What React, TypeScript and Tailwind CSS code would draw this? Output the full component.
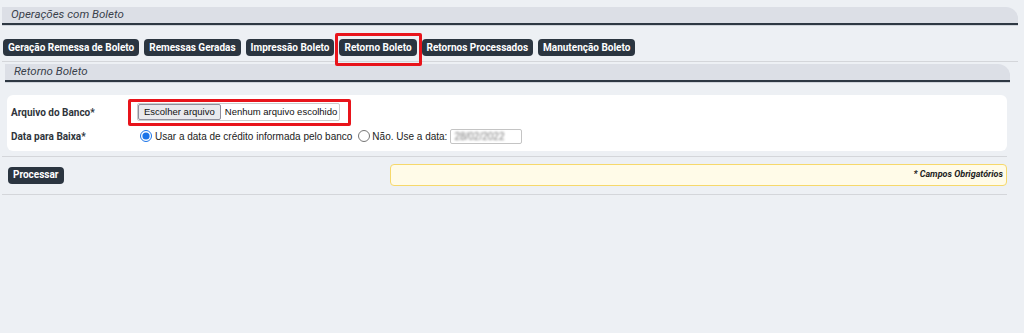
import React from "react";

const tabs = [
  "Geração Remessa de Boleto",
  "Remessas Geradas",
  "Impressão Boleto",
  "Retorno Boleto",
  "Retornos Processados",
  "Manutenção Boleto",
];

function SectionHeader({ title, className }: { title: string; className?: string }) {
  return (
    <div className={`${className} h-[18px] bg-[#dcdfe6] rounded-tr-[12px] border-b-2 border-[#2e3843] flex items-center pl-[9px] shadow-[0_1px_0_#cfd3da]`}>
      <span className="italic text-[11.5px] text-[#3a414b] leading-none">{title}</span>
    </div>
  );
}

function Tab({ label }: { label: string }) {
  return (
    <span className="h-[17px] px-[5px] bg-[#2b3540] text-white font-bold text-[10px] rounded-[4px] flex items-center leading-none whitespace-nowrap">
      {label}
    </span>
  );
}

export default function App() {
  return (
    <div className="min-h-[333px] w-full bg-[#edf0f4] font-['Roboto',sans-serif] text-[#222]">
      <div className="pt-[7px] pl-[2px] pr-[6px]">
        <SectionHeader title="Operações com Boleto" />
      </div>

      <div className="flex gap-[5px] pl-[3px] mt-[14px]">
        {tabs.map((t) =>
          t === "Retorno Boleto" ? (
            <span key={t} className="relative flex">
              <Tab label={t} />
              <span className="absolute -left-[4px] -right-[5px] -top-[6px] -bottom-[10px] border-[3px] border-[#e8141b] rounded-[2px]" />
            </span>
          ) : (
            <Tab key={t} label={t} />
          )
        )}
      </div>

      <div className="mt-[5px] ml-[2px] mr-[6px] h-px bg-[#d4d6da]" />

      <div className="pt-[2px] pl-[5px] pr-[14px]">
        <SectionHeader title="Retorno Boleto" />
      </div>

      <div className="mt-[13px] ml-[7px] mr-[17px] bg-white rounded-[6px] pt-[5px] pb-[5px] font-['Liberation_Sans',Arial,sans-serif] text-[10px]">
        <div className="flex items-center h-[24px]">
          <div className="w-[126px] pl-[4px] font-bold text-[10px] text-[#2f343b] font-['Roboto',sans-serif]">Arquivo do Banco*</div>
          <div className="relative flex items-center ml-[4px] h-[18px] border border-[#ccc] rounded-[2px] bg-white pr-[2px] text-[9.5px]">
            <span className="h-[16px] px-[5px] bg-[#e9e9ed] border border-[#8f8f9d] rounded-[2px] flex items-center text-[#111]">
              Escolher arquivo
            </span>
            <span className="ml-[4px] text-[#111]">Nenhum arquivo escolhido</span>
            <span className="absolute -left-[10px] -right-[12px] -top-[5px] -bottom-[6px] border-[3px] border-[#e8141b] rounded-[2px]" />
          </div>
        </div>
        <div className="flex items-center h-[20px] mt-[2px]">
          <div className="w-[126px] pl-[4px] font-bold text-[10px] text-[#2f343b] font-['Roboto',sans-serif]">Data para Baixa*</div>
          <label className="flex items-center ml-[7px] text-[#222]">
            <input type="radio" name="baixa" defaultChecked className="w-[12px] h-[12px] m-0 mr-[3px] accent-[#1a73e8]" />
            Usar a data de crédito informada pelo banco
          </label>
          <label className="flex items-center ml-[6px] text-[#222]">
            <input type="radio" name="baixa" className="w-[12px] h-[12px] m-0 mr-[2px]" />
            Não. Use a data:
          </label>
          <span className="ml-[3px] w-[72px] h-[15px] border border-[#c4c4c4] rounded-[2px] bg-white flex items-center pl-[3px]">
            <span className="text-[10px] text-[#777] blur-[1.2px]">28/02/2022</span>
          </span>
        </div>
      </div>

      <div className="mt-[5px] ml-[2px] mr-[17px] h-px bg-[#d4d6da]" />

      <div className="flex items-center mt-[7px] ml-[8px] mr-[17px]">
        <span className="h-[17px] px-[5px] bg-[#2b3540] text-white font-bold text-[10px] rounded-[4px] flex items-center leading-none">
          Processar
        </span>
        <div className="ml-auto w-[617px] h-[22px] bg-[#fffbe8] border border-[#f6d86b] rounded-[4px] flex items-center justify-end pr-[3px]">
          <span className="italic font-bold text-[9px] text-[#222]">* Campos Obrigatórios</span>
        </div>
      </div>

      <div className="mt-[8px] ml-[2px] mr-[17px] h-px bg-[#d4d6da]" />
    </div>
  );
}
